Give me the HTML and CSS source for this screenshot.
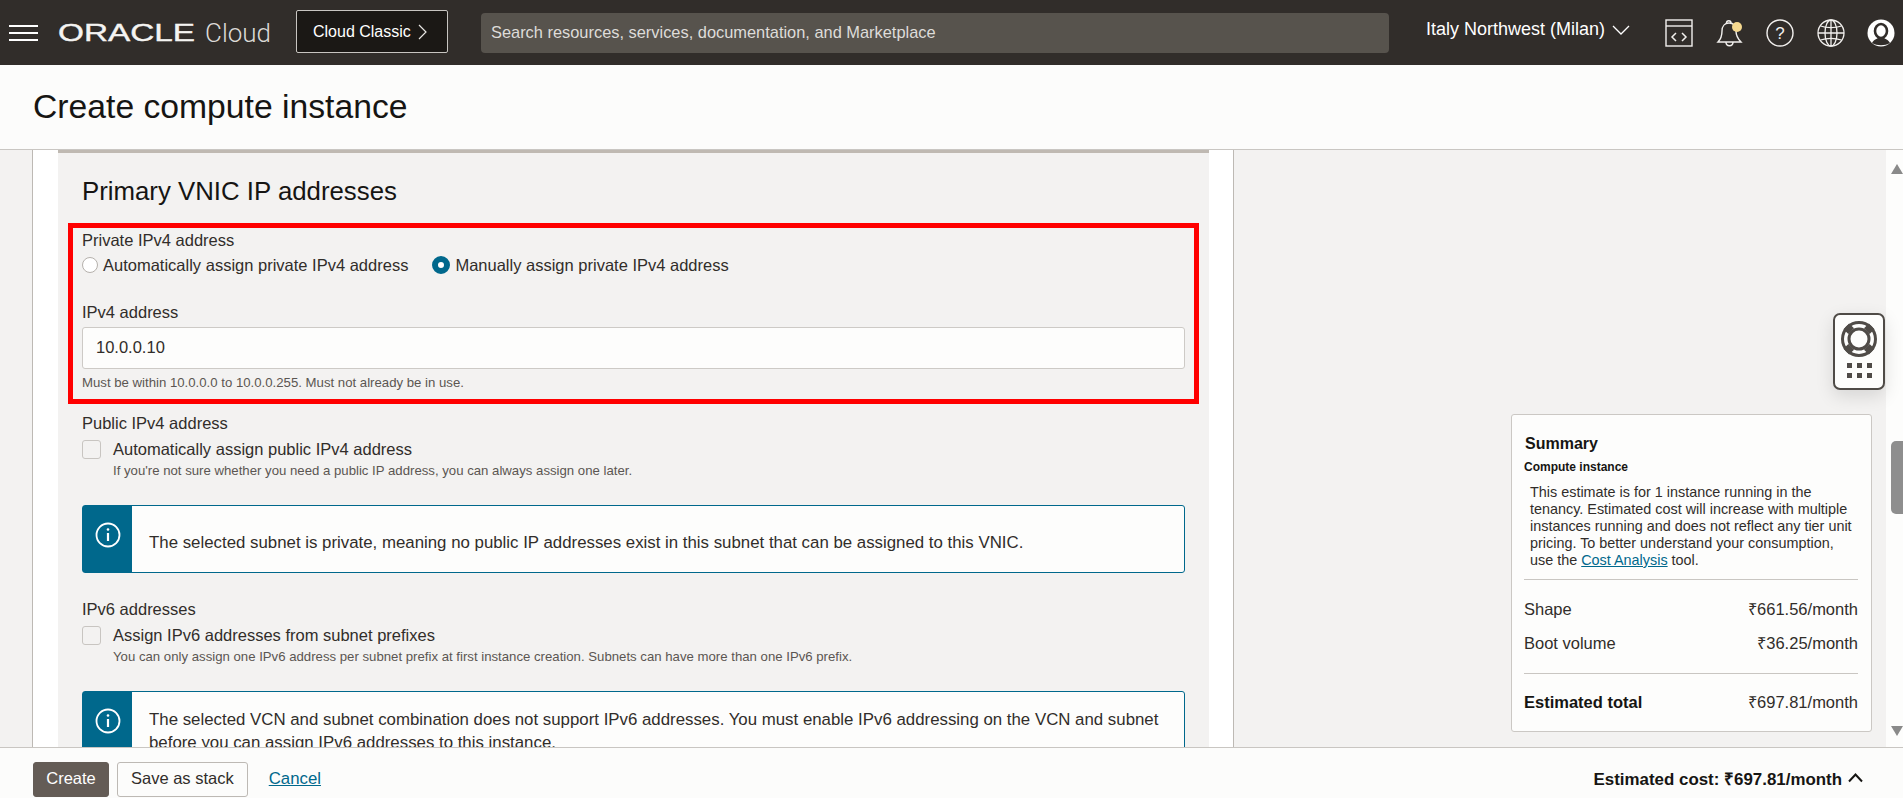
FILE: index.html
```html
<!DOCTYPE html>
<html lang="en">
<head>
<meta charset="utf-8">
<title>Create compute instance</title>
<link rel="stylesheet" href="styles.css">
</head>
<body>
<header class="topbar">
  <button class="burger" aria-label="Menu"><span></span><span></span><span></span></button>
  <div class="logo">
    <svg class="logo-word" width="140" height="24" viewBox="0 0 140 24"><text x="1" y="20" textLength="137" lengthAdjust="spacingAndGlyphs">ORACLE</text></svg>
    <span class="logo-cloud">Cloud</span>
  </div>
  <button class="classic">Cloud Classic
    <svg width="9" height="16" viewBox="0 0 9 16"><path d="M1 1l7 7-7 7" fill="none" stroke="#e8e6e3" stroke-width="1.2"/></svg>
  </button>
  <div class="search">Search resources, services, documentation, and Marketplace</div>
  <div class="region">Italy Northwest (Milan)
    <svg width="18" height="10" viewBox="0 0 18 10"><path d="M1 1l8 8 8-8" fill="none" stroke="#fff" stroke-width="1.3"/></svg>
  </div>
  <div class="top-icons">
    <svg width="28" height="28" viewBox="0 0 28 28" fill="none" stroke="#f2f0ee" stroke-width="1.4"><rect x="1" y="1" width="26" height="26"/><path d="M1 7h26"/><path d="M11 14l-4 4 4 4M17 14l4 4-4 4" stroke-width="1.5"/></svg>
    <svg width="28" height="30" viewBox="0 0 28 30" fill="none" stroke="#f2f0ee" stroke-width="1.4"><path d="M2 24c3-3 4-6 4-11 0-5 3-8 7-8 5 0 7 3 7 8 0 5 2 8 5 11z"/><path d="M10.500 5c0-3 4.500-3 4.500 0M10 24c0 5 7 5 7 0"/><circle cx="21" cy="9" r="5" fill="#f6d98f" stroke="none"/></svg>
    <svg width="28" height="28" viewBox="0 0 28 28" fill="none" stroke="#f2f0ee" stroke-width="1.4"><circle cx="14" cy="14" r="13"/><text class="help-mark" x="14" y="20" text-anchor="middle">?</text></svg>
    <svg width="28" height="28" viewBox="0 0 28 28" fill="none" stroke="#f2f0ee" stroke-width="1.3"><circle cx="14" cy="14" r="13"/><ellipse cx="14" cy="14" rx="6" ry="13"/><path d="M3.500 7c6 2 15 2 21 0M1 14h26M3.500 21c6-2 15-2 21 0"/><path d="M14 1v26"/></svg>
    <svg width="28" height="28" viewBox="0 0 28 28"><circle cx="14" cy="14" r="13.500" fill="#fff"/><ellipse cx="14" cy="12" rx="6" ry="7" fill="none" stroke="#312d2a" stroke-width="2.600"/><path d="M5 24c2-4 5-4 6-5h6c1 1 4 1 6 5-5 3-13 3-18 0z" fill="#312d2a"/></svg>
  </div>
</header>

<div class="page-title"><h1>Create compute instance</h1></div>

<main class="main">
  <section class="card">
    <div class="panel">
      <h2>Primary VNIC IP addresses</h2>

      <div class="label label-first">Private IPv4 address</div>
      <div class="radios">
        <label class="radio"><span class="dot"></span>Automatically assign private IPv4 address</label>
        <label class="radio"><span class="dot dot-on"></span>Manually assign private IPv4 address</label>
      </div>
      <div class="label label-ip">IPv4 address</div>
      <div class="input">10.0.0.10</div>
      <div class="help help-input">Must be within 10.0.0.0 to 10.0.0.255. Must not already be in use.</div>

      <div class="label label-public">Public IPv4 address</div>
      <label class="check"><span class="box"></span>Automatically assign public IPv4 address</label>
      <div class="help help-check">If you're not sure whether you need a public IP address, you can always assign one later.</div>
      <div class="info info-single">
        <div class="info-strip"><svg width="26" height="26" viewBox="0 0 26 26" fill="none" stroke="#fff" stroke-width="1.800"><circle cx="13" cy="13" r="11.500"/><path d="M13 11v8" stroke-width="2.200"/><circle cx="13" cy="7.500" r="1.300" fill="#fff" stroke="none"/></svg></div>
        <p>The selected subnet is private, meaning no public IP addresses exist in this subnet that can be assigned to this VNIC.</p>
      </div>

      <div class="label label-v6">IPv6 addresses</div>
      <label class="check"><span class="box"></span>Assign IPv6 addresses from subnet prefixes</label>
      <div class="help help-check">You can only assign one IPv6 address per subnet prefix at first instance creation. Subnets can have more than one IPv6 prefix.</div>
      <div class="info">
        <div class="info-strip"><svg width="26" height="26" viewBox="0 0 26 26" fill="none" stroke="#fff" stroke-width="1.800"><circle cx="13" cy="13" r="11.500"/><path d="M13 11v8" stroke-width="2.200"/><circle cx="13" cy="7.500" r="1.300" fill="#fff" stroke="none"/></svg></div>
        <p>The selected VCN and subnet combination does not support IPv6 addresses. You must enable IPv6 addressing on the VCN and subnet before you can assign IPv6 addresses to this instance.</p>
      </div>
    </div>
    <div class="highlight"></div>
  </section>

  <aside class="side">
    <div class="summary">
      <h3>Summary</h3>
      <h4>Compute instance</h4>
      <p class="summary-text">This estimate is for 1 instance running in the tenancy. Estimated cost will increase with multiple instances running and does not reflect any tier unit pricing. To better understand your consumption, use the <a href="#">Cost Analysis</a> tool.</p>
      <div class="rows rows-items">
        <div class="row"><span>Shape</span><span>₹661.56/month</span></div>
        <div class="row"><span>Boot volume</span><span>₹36.25/month</span></div>
      </div>
      <div class="row row-total"><strong>Estimated total</strong><span>₹697.81/month</span></div>
    </div>
  </aside>

  <div class="scrollbar">
    <span class="arrow arrow-up"></span>
    <span class="thumb"></span>
    <span class="arrow arrow-down"></span>
  </div>

  <div class="widget">
    <svg width="38" height="38" viewBox="0 0 38 38" fill="none" stroke="#4f4b47">
      <path d="M11.200 11.200L6.300 6.300M26.800 11.200l4.900-4.900M11.200 26.800l-4.900 4.900M26.800 26.800l4.900 4.900" stroke-width="8"/>
      <circle cx="19" cy="19" r="16.500" stroke-width="3"/>
      <circle cx="19" cy="19" r="10" stroke-width="3"/>
    </svg>
    <div class="widget-grid"><i></i><i></i><i></i><i></i><i></i><i></i></div>
  </div>
</main>

<footer class="footer">
  <button class="btn btn-primary">Create</button>
  <button class="btn">Save as stack</button>
  <a class="cancel" href="#">Cancel</a>
  <div class="cost">Estimated cost: ₹697.81/month
    <svg width="15" height="10" viewBox="0 0 15 10"><path d="M1 8.500l6.500-7 6.500 7" fill="none" stroke="#161513" stroke-width="2"/></svg>
  </div>
</footer>
</body>
</html>
```
FILE: styles.css
```css
* { box-sizing: border-box; }
html, body { margin: 0; height: 100%; }
body {
  display: flex;
  flex-direction: column;
  height: 798px;
  overflow: hidden;
  font-family: "Liberation Sans", Arial, sans-serif;
  font-size: 16.500px;
  color: #312d2a;
  background: #f3f2f1;
}
button { font-family: inherit; }

.topbar {
  flex: 0 0 65px;
  display: flex;
  align-items: center;
  background: #312d2a;
  color: #fff;
}
.burger {
  width: 29px;
  margin-left: 9px;
  padding: 0;
  border: 0;
  background: none;
  display: flex;
  flex-direction: column;
  gap: 5px;
}
.burger span { display: block; height: 2px; background: #fff; }
.logo { display: flex; align-items: center; margin-left: 19px; width: 239px; }
.logo-word { display: block; }
.logo-word text {
  font-family: "Liberation Sans", Arial, sans-serif;
  font-size: 24px;
  fill: #f5f4f2;
  stroke: #f5f4f2;
  stroke-width: 0.4;
}
.logo-cloud {
  margin-left: 8px;
  font-family: Roboto, sans-serif;
  font-weight: 300;
  font-size: 26px;
  color: #dcdad7;
}
.classic {
  width: 152px;
  height: 43px;
  margin-top: -2px;
  padding: 0 0 0 16px;
  display: flex;
  align-items: center;
  gap: 7px;
  background: #1b1815;
  color: #fff;
  border: 1px solid #c8c5c1;
  border-radius: 2px;
  font-size: 16px;
}
.search {
  width: 908px;
  height: 40px;
  margin-left: 33px;
  padding-left: 10px;
  display: flex;
  align-items: center;
  background: #57534d;
  border-radius: 4px;
  color: #dedcd9;
  font-size: 16.400px;
}
.region {
  margin-left: 37px;
  margin-top: -6px;
  display: flex;
  align-items: center;
  gap: 7px;
  white-space: nowrap;
  font-size: 18px;
}
.top-icons {
  margin-left: 35px;
  display: flex;
  align-items: center;
  gap: 22.500px;
}
.help-mark {
  fill: #f2f0ee;
  stroke: none;
  font-family: "Liberation Sans", Arial, sans-serif;
  font-size: 17px;
}

.page-title {
  flex: 0 0 84px;
  display: flex;
  align-items: center;
  padding: 0 0 2px 33px;
  background: #fcfcfb;
}
.page-title h1 { margin: 0; font-size: 33.700px; font-weight: 400; color: #161513; }

.main {
  flex: 0 0 598px;
  position: relative;
  display: flex;
  overflow: hidden;
  border-top: 1px solid #c9c6c2;
  padding-left: 32px;
}
.card {
  position: relative;
  flex: 0 0 1202px;
  height: 700px;
  padding-left: 25px;
  padding-right: 24px;
  background: #fff;
  border-left: 1px solid #bdb9b4;
  border-right: 1px solid #bdb9b4;
}
.panel {
  height: 700px;
  margin-top: -1px;
  padding: 22px 24px 0 24px;
  background: #f3f2f1;
  border-top: 4px solid #bfb9b2;
}
.panel h2 {
  margin: 0;
  font-size: 25.800px;
  line-height: 32px;
  font-weight: 400;
  color: #161513;
}
.highlight {
  position: absolute;
  left: 35px;
  top: 73px;
  width: 1131px;
  height: 181px;
  border: 5px solid #f00;
}
.label { line-height: 20px; }
.label-first { margin-top: 23px; }
.label-ip { margin-top: 25px; }
.label-public { margin-top: 22px; }
.label-v6 { margin-top: 26px; }
.radios { display: flex; gap: 24px; margin-top: 3px; height: 24px; align-items: center; }
.radio { display: flex; align-items: center; gap: 5px; }
.dot {
  width: 16px;
  height: 16px;
  border-radius: 50%;
  border: 1px solid #b5b1ac;
  background: #fff;
}
.dot-on { width: 18px; height: 18px; border: 6px solid #00688c; }
.input {
  height: 42px;
  margin-top: 5px;
  padding: 0 0 1px 13px;
  display: flex;
  align-items: center;
  background: #fdfdfc;
  border: 1px solid #cdcac6;
  border-radius: 3px;
}
.help { font-size: 13.200px; line-height: 16px; color: #5b5652; }
.help-input { margin-top: 6px; }
.help-check { margin-top: 3px; padding-left: 31px; }
.check { display: flex; align-items: center; gap: 12px; margin-top: 5px; line-height: 22px; }
.box {
  width: 19px;
  height: 19px;
  border: 1px solid #c8c5c1;
  border-radius: 3px;
  background: #f3f2f1;
}
.info {
  display: flex;
  margin-top: 26px;
  background: #fdfdfc;
  border: 1px solid #00688c;
  border-radius: 3px;
  font-size: 16.840px;
}
.info-strip {
  flex: 0 0 49px;
  display: flex;
  justify-content: center;
  padding-top: 16px;
  background: #00688c;
  color: #fff;
}
.info p { margin: 0; padding: 16px 16px 16px 17px; line-height: 23px; }
.info-single p { padding-top: 25px; padding-bottom: 18px; }

.side { flex: 1; padding: 264px 0 0 277px; }
.summary {
  width: 361px;
  height: 318px;
  padding: 19px 13px 0 12px;
  background: #fdfdfc;
  border: 1px solid #cbc8c4;
  border-radius: 3px;
}
.summary h3 { margin: 0 0 0 1px; font-size: 16px; line-height: 20px; color: #161513; }
.summary h4 { margin: 5px 0 0; font-size: 12px; line-height: 16px; color: #161513; }
.summary-text { margin: 9px 0 0 6px; font-size: 14.400px; line-height: 17px; }
.summary-text a, .cancel { color: #00688c; }
.rows-items {
  margin-top: 10px;
  padding: 12px 0 13px;
  border-top: 1px solid #c9c6c2;
  border-bottom: 1px solid #c9c6c2;
}
.row { display: flex; justify-content: space-between; line-height: 34px; }
.row-total { margin-top: 11px; }
.row-total strong { color: #161513; }

.scrollbar {
  flex: 0 0 17px;
  position: relative;
  display: flex;
  flex-direction: column;
  align-items: flex-end;
  background: #fdfdfc;
}
.arrow {
  width: 0;
  height: 0;
  border-left: 6.500px solid transparent;
  border-right: 6.500px solid transparent;
}
.arrow-up { margin-top: 14px; border-bottom: 10px solid #8a8a8a; }
.thumb {
  width: 12px;
  height: 73px;
  margin-top: 267px;
  background: #8e8e8e;
  border-radius: 5px 0 0 5px;
}
.arrow-down { margin-top: 212px; border-top: 10px solid #8a8a8a; }

.widget {
  position: absolute;
  left: 1833px;
  top: 163px;
  width: 52px;
  height: 77px;
  padding-top: 5px;
  display: flex;
  flex-direction: column;
  align-items: center;
  background: #fdfdfc;
  border: 2px solid #4f4b47;
  border-radius: 7px;
  box-shadow: 0 6px 18px rgba(0, 0, 0, .12);
}
.widget-grid {
  margin-top: 5px;
  display: grid;
  grid-template-columns: repeat(3, 5px);
  gap: 5px 5px;
}
.widget-grid i { width: 5px; height: 5px; background: #4f4b47; }

.footer {
  flex: 1;
  display: flex;
  align-items: center;
  padding: 13px 40px 0 33px;
  background: #fcfcfb;
  border-top: 1px solid #c9c6c2;
  overflow: hidden;
}
.btn {
  height: 35px;
  padding: 0 13px 2px;
  margin-right: 8px;
  background: #fcfcfb;
  color: #312d2a;
  border: 1px solid #bdb9b4;
  border-radius: 3px;
  font-size: 16.500px;
}
.btn-primary { width: 76px; padding: 0 0 2px; background: #645c56; border-color: #645c56; color: #fff; }
.cancel { margin-left: 13px; margin-bottom: 1px; font-size: 16.800px; }
.cost {
  margin-left: auto;
  margin-bottom: 3px;
  display: flex;
  align-items: center;
  gap: 6px;
  font-weight: 700;
  font-size: 16.900px;
  color: #161513;
}
```
